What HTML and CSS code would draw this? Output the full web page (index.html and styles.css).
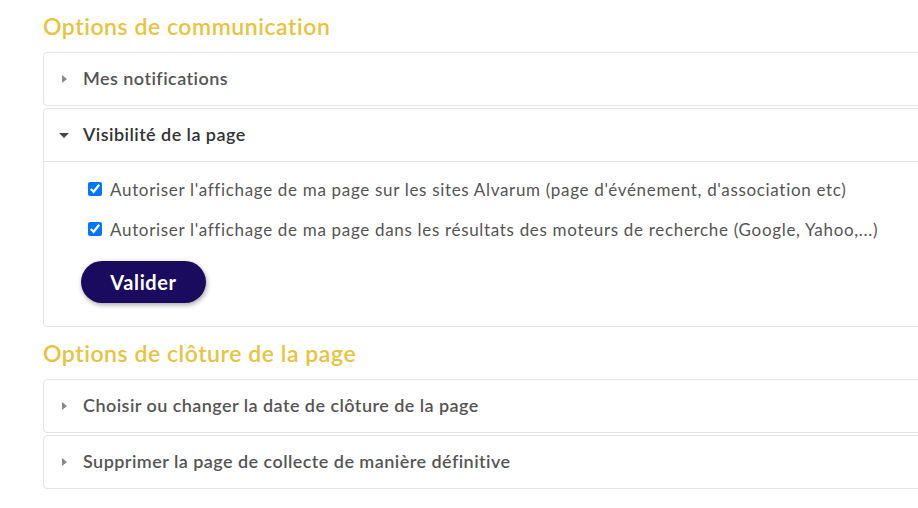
FILE: index.html
```html
<!DOCTYPE html>
<html lang="fr">
<head>
<meta charset="utf-8">
<title>Options</title>
<link rel="stylesheet" href="styles.css">
</head>
<body>
<div class="page">
  <h2 class="section-title">Options de communication</h2>
  <div class="card">
    <div class="card-header">
      <span class="caret caret-right"></span>
      <span class="card-title">Mes notifications</span>
    </div>
  </div>
  <div class="card open">
    <div class="card-header">
      <span class="caret caret-down"></span>
      <span class="card-title">Visibilité de la page</span>
    </div>
    <div class="card-body">
      <label class="check-row"><input type="checkbox" checked><span>Autoriser l'affichage de ma page sur les sites Alvarum (page d'événement, d'association etc)</span></label>
      <label class="check-row"><input type="checkbox" checked><span>Autoriser l'affichage de ma page dans les résultats des moteurs de recherche (Google, Yahoo,...)</span></label>
      <button class="btn-primary" type="button">Valider</button>
    </div>
  </div>

  <h2 class="section-title">Options de clôture de la page</h2>
  <div class="card">
    <div class="card-header">
      <span class="caret caret-right"></span>
      <span class="card-title">Choisir ou changer la date de clôture de la page</span>
    </div>
  </div>
  <div class="card">
    <div class="card-header">
      <span class="caret caret-right"></span>
      <span class="card-title">Supprimer la page de collecte de manière définitive</span>
    </div>
  </div>
</div>
</body>
</html>
```

FILE: styles.css
```css
html, body {
  margin: 0;
  padding: 0;
  background: #ffffff;
  overflow: hidden;
}

body {
  font-family: Lato, "Open Sans", Arial, sans-serif;
  color: #555555;
}

.page {
  width: 1000px;
  padding-left: 43px;
}

.section-title {
  margin: 11px 0 11px;
  font-size: 23px;
  line-height: 30px;
  font-weight: 600;
  letter-spacing: 0.55px;
  color: #e6c43f;
}

.card {
  border: 1px solid #e5e5e5;
  border-radius: 4px;
  margin-bottom: 2px;
  background: #fff;
}

.card-header {
  height: 52px;
  display: flex;
  align-items: center;
  padding-left: 17px;
}

.open .card-header {
  border-bottom: 1px solid #e5e5e5;
}

.caret {
  width: 22px;
  display: flex;
  align-items: center;
}

.caret-right::before {
  content: "";
  margin-left: 1px;
  border-top: 4px solid transparent;
  border-bottom: 4px solid transparent;
  border-left: 5px solid #8a8a8a;
}

.caret-down::before {
  content: "";
  margin-left: -2px;
  border-left: 5px solid transparent;
  border-right: 5px solid transparent;
  border-top: 5px solid #444444;
}

.card-title {
  font-size: 18px;
  line-height: 22px;
  padding-bottom: 2px;
  font-weight: 600;
  letter-spacing: 0.45px;
  color: #555555;
}

.open .card-title {
  color: #333333;
}

.card-body {
  padding: 15px 0 23px 37px;
  display: flex;
  flex-direction: column;
  align-items: flex-start;
}

.check-row {
  display: flex;
  align-items: center;
  gap: 8px;
  height: 24px;
  margin-left: 7px;
  margin-bottom: 16px;
  font-size: 17px;
  letter-spacing: 0.68px;
  color: #555555;
}

.check-row input {
  margin: 0;
  width: 14px;
  height: 14px;
}

.check-row + .check-row {
  margin-bottom: 20px;
}

.btn-primary {
  height: 42px;
  width: 125px;
  border: none;
  border-radius: 21px;
  background: #1b0b5e;
  color: #ffffff;
  font-family: inherit;
  font-size: 20px;
  font-weight: 700;
  letter-spacing: 0.6px;
  box-shadow: 1px 2px 5px rgba(0, 0, 0, 0.35);
}
```
